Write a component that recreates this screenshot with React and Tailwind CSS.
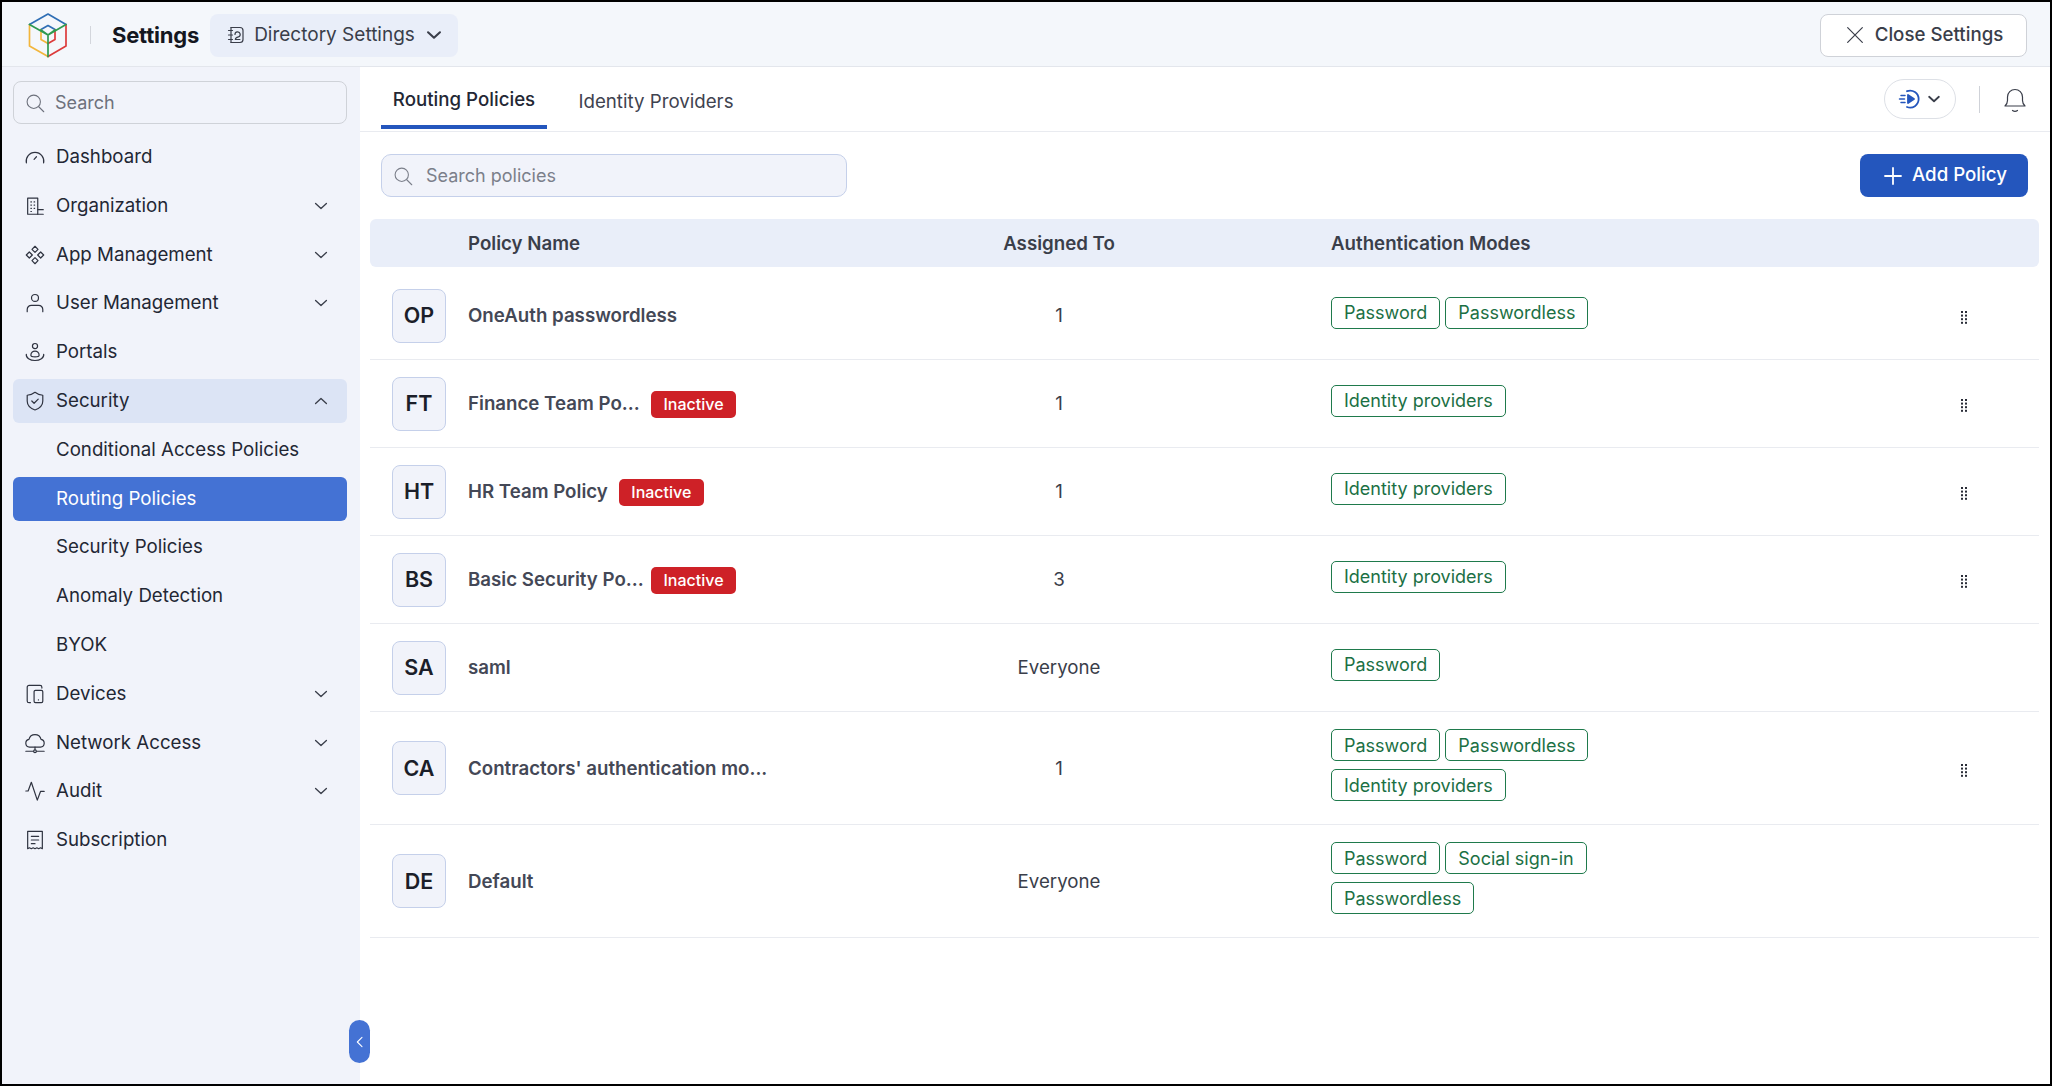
import React from "react";

const S = ({ size = 22, className = "", children, sw = 1.3 }) => (
  <svg width={size} height={size} viewBox="0 0 24 24" fill="none" stroke="currentColor" strokeWidth={sw} strokeLinecap="round" strokeLinejoin="round" className={"shrink-0 " + className}>
    {children}
  </svg>
);

const Logo = () => (
  <svg width="40" height="46" viewBox="0 0 40 46" fill="none" strokeWidth="1.7" strokeLinejoin="round" strokeLinecap="round" className="shrink-0">
    <path d="M1.5 12.500 20 2l18 10.500" stroke="#2f6fb5" />
    <path d="M13 17.500 20 13.500l7 4" stroke="#2f6fb5" />
    <path d="M1.500 13v21L20 44.500" stroke="#f2b63c" />
    <path d="M38 13v21L20 44.500" stroke="#dc3b3b" />
    <path d="M13 18v9.500l7 4" stroke="#f2b63c" />
    <path d="M27 18v9.500l-7 4" stroke="#dc3b3b" />
    <path d="M1.500 12.500 20 23l18-10.500M20 23v21.500M13 18l7 5 7-5" stroke="#2e9a4f" />
  </svg>
);

const Chevron = ({ up, size = 20, className = "", sw = 1.6 }) => (
  <S size={size} sw={sw} className={className}>
    <path d={up ? "M5.500 15 12 9l6.500 6" : "M5.500 9 12 15l6.500-6"} />
  </S>
);

const icons = {
  dashboard: <><path d="M2.600 18.500a9.600 9.600 0 1 1 18.800 0" /><path d="m11 14.500 2.600-2.800" /></>,
  org: <><path d="M4 21V3.500h11V21z" /><path d="M15 21h6M15 16h6" /><path d="M7.500 7.500h.6M11 7.500h.6M7.500 11h.6M11 11h.6M7.500 14.500h.6M11 14.500h.6M7.500 18h.6" /></>,
  app: <><path d="m12 2.500 3.300 3.300L12 9.100 8.700 5.800z" /><path d="m12 14.900 3.300 3.300-3.300 3.300-3.300-3.300z" /><path d="m5.800 8.700 3.300 3.300-3.300 3.300L2.500 12z" /><path d="m18.200 8.700 3.300 3.300-3.300 3.300-3.300-3.300z" /></>,
  user: <><circle cx="12" cy="6.500" r="3.800" /><path d="M3.500 21.500V19a4.500 4.500 0 0 1 4.500-4.500h8a4.500 4.500 0 0 1 4.500 4.500v2.500" /></>,
  portal: <><circle cx="12" cy="5.500" r="2.800" /><path d="M7.500 15.500a4.500 4.500 0 0 1 9 0c0 1.200-2 1.800-4.500 1.800s-4.500-.6-4.500-1.800z" /><path d="M2.500 14.500c-.5 4 4 6.800 9.500 6.800s10-2.800 9.500-6.800" /></>,
  security: <><path d="M12 2.500c2.500 2 5.500 3 8.500 3.200v6.300c0 4.500-3.500 8-8.500 9.800-5-1.800-8.500-5.300-8.500-9.800V5.700c3-.2 6-1.200 8.500-3.200z" /><path d="m8.500 12 2.500 2.500 4.500-4.500" /></>,
  devices: <><path d="M7 21.500H5.500a2 2 0 0 1-2-2v-15a2 2 0 0 1 2-2h12a2 2 0 0 1 2 2v1" /><rect x="11" y="8" width="9.500" height="13.500" rx="1.500" /><path d="M15.700 18.500h.1" /></>,
  network: <><path d="M6.500 16.500H6a4.300 4.300 0 0 1-.6-8.500 6.800 6.800 0 0 1 13.200 0 4.300 4.300 0 0 1-.6 8.500z" /><path d="M12 16.500v2.500M2 21h8M14 21h8" /><circle cx="12" cy="21" r="1.500" /></>,
  audit: <><path d="M2 12h2.500L8 2.500 14.500 22l3.500-9.500h4" /></>,
  sub: <><path d="M4 2.500h16v19l-2-1-2 1-2-1-2 1-2-1-2 1-2-1-2 1z" /><path d="M8 8h8M8 12h8M8 16h4" /></>,
};

const Search = ({ size = 22, className = "" }) => (
  <S size={size} className={className} sw={1.3}><circle cx="10.500" cy="10.500" r="8" /><path d="m16.500 16.500 6 6" /></S>
);

const NavItem = ({ icon, label, chevron, up, active }) => (
  <div className={"flex h-[44px] items-center rounded-md pl-[11px] pr-[16px] " + (active ? "bg-[#dce4f5]" : "")}>
    <S size={22} className="text-[#2f3340]">{icons[icon]}</S>
    <span className="ml-[10px] flex-1 text-[#232734]">{label}</span>
    {chevron && <Chevron up={up} size={20} className="text-[#3a3e4a]" />}
  </div>
);

const SubItem = ({ label, active }) => (
  <div className={"flex h-[44px] items-center rounded-md pl-[43px] " + (active ? "bg-[#4472d4] text-white" : "text-[#232734]")}>{label}</div>
);

const Tag = ({ children }) => (
  <span className="flex h-[32px] items-center rounded-[5px] border-[1.5px] border-[#1f7a4c] bg-white px-[12px] text-[18px] text-[#1b7044]">{children}</span>
);

const Dots = () => (
  <svg width="8" height="15" viewBox="0 0 8 15" fill="#2a2d38">
    {[0, 1].map((c) => [0, 1, 2, 3].map((r) => <rect key={c + "-" + r} x={1 + c * 4} y={1 + r * 3.600} width="2" height="2" />))}
  </svg>
);

const rows = [
  { a: "OP", n: "OneAuth passwordless", to: "1", tags: ["Password", "Passwordless"], menu: true },
  { a: "FT", n: "Finance Team Po...", inactive: true, cut: true, to: "1", tags: ["Identity providers"], menu: true },
  { a: "HT", n: "HR Team Policy", inactive: true, to: "1", tags: ["Identity providers"], menu: true },
  { a: "BS", n: "Basic Security Po...", inactive: true, cut: true, to: "3", tags: ["Identity providers"], menu: true },
  { a: "SA", n: "saml", to: "Everyone", tags: ["Password"] },
  { a: "CA", n: "Contractors' authentication mo...", to: "1", tags: ["Password", "Passwordless", "Identity providers"], menu: true },
  { a: "DE", n: "Default", to: "Everyone", tags: ["Password", "Social sign-in", "Passwordless"] },
];

const gridCols = "grid grid-cols-[98px_400px_382px_1fr_150px] items-center";

export default function App() {
  return (
    <div className="flex h-[1086px] w-[2052px] flex-col overflow-hidden border-2 border-black bg-white text-[18.7px] font-['Inter','Liberation_Sans',sans-serif]">
      <header className="flex h-[65px] shrink-0 items-center border-b border-[#e3e6ec] bg-[#f4f7fb] pl-[26px] pr-[23px] pt-[2px]">
        <Logo />
        <div className="ml-[22px] h-[18px] w-px bg-[#d3d6dc]" />
        <span className="ml-[21px] text-[22px] font-bold tracking-[-0.2px] text-[#14171f]">Settings</span>
        <div className="ml-[11px] flex h-[43px] w-[248px] items-center rounded-lg bg-[#e9eef9] pl-[16px] text-[#3a3e4a]">
          <svg width="20" height="20" viewBox="0 0 20 20" fill="none" stroke="currentColor" strokeWidth="1.200" strokeLinecap="round" className="shrink-0">
            <path d="M5 2.500h9a3 3 0 0 1 3 3v9a3 3 0 0 1-3 3H5" />
            <path d="M5 2.500v15M2.500 5.500h4M2.500 10h4M2.500 14.500h4" />
            <path d="M9 9.500a2.600 2.600 0 1 1 3.400 2.400c-2 .5-3 1.200-3 2.600h4.500" />
          </svg>
          <span className="ml-[8px] whitespace-nowrap pt-[1px] text-[19px]">Directory Settings</span>
          <Chevron size={22} sw={2.300} className="ml-[8px]" />
        </div>
        <div className="flex-1" />
        <div className="flex h-[43px] w-[207px] items-center justify-center rounded-lg border border-[#cfd2d8] bg-white text-[#3a3e4a]">
          <S size={22} sw={1.300}><path d="M4 4l16 16M20 4 4 20" /></S>
          <span className="ml-[9px] pt-[1px] font-medium">Close Settings</span>
        </div>
      </header>

      <div className="flex min-h-0 flex-1">
        <aside className="relative flex w-[358px] shrink-0 flex-col bg-[#f1f3fa] pl-[11px] pr-[13px] pt-[14px]">
          <div className="flex h-[43px] items-center rounded-lg border border-[#cfd2d8] pl-[11px] text-[18px] text-[#6d717c]">
            <Search size={20} />
            <span className="ml-[10px]">Search</span>
          </div>
          <div className="mt-[11px] flex flex-col gap-[4.800px]">
            <NavItem icon="dashboard" label="Dashboard" />
            <NavItem icon="org" label="Organization" chevron />
            <NavItem icon="app" label="App Management" chevron />
            <NavItem icon="user" label="User Management" chevron />
            <NavItem icon="portal" label="Portals" />
            <NavItem icon="security" label="Security" chevron up active />
            <SubItem label="Conditional Access Policies" />
            <SubItem label="Routing Policies" active />
            <SubItem label="Security Policies" />
            <SubItem label="Anomaly Detection" />
            <SubItem label="BYOK" />
            <NavItem icon="devices" label="Devices" chevron />
            <NavItem icon="network" label="Network Access" chevron />
            <NavItem icon="audit" label="Audit" chevron />
            <NavItem icon="sub" label="Subscription" />
          </div>
          <div className="absolute bottom-[21px] right-[-10px] z-10 flex h-[43px] w-[21px] items-center justify-center rounded-full bg-[#4472d4] text-white">
            <S size={16} sw={1.600}><path d="m15 5-7 7 7 7" /></S>
          </div>
        </aside>

        <main className="flex min-w-0 flex-1 flex-col">
          <div className="flex h-[65px] shrink-0 items-stretch border-b border-[#e9ebf0] pl-[21px] pr-[22px]">
            <div className="mb-[2px] flex w-[166px] items-center justify-center border-b-4 border-[#2456bd] pt-[8px] font-medium text-[#232734]">Routing Policies</div>
            <div className="mb-[2px] ml-[29px] flex w-[160px] items-center justify-center whitespace-nowrap pt-[8px] text-[#3f4350]">Identity Providers</div>
            <div className="flex-1" />
            <div className="flex items-center">
              <div className="flex h-[40px] w-[72px] items-center justify-center gap-[3px] rounded-full border border-[#dde0e6]">
                <svg width="24" height="24" viewBox="0 0 24 24" fill="none" stroke="#2456bd" strokeWidth="1.800" strokeLinecap="round">
                  <path d="M9 4.200A8.500 8.500 0 1 1 9 20" />
                  <path d="M10 8l6 4-6 4z" fill="#2456bd" strokeLinejoin="round" />
                  <path d="M3 8.500h4M1.500 12h5M3 15.500h4" strokeWidth="1.500" />
                </svg>
                <Chevron size={18} sw={2.400} className="text-[#3a3e4a]" />
              </div>
              <div className="ml-[23px] h-[27px] w-px bg-[#cfd2d8]" />
              <svg width="26" height="28" viewBox="0 0 26 28" fill="none" stroke="#3a3e4a" strokeWidth="1.200" strokeLinecap="round" strokeLinejoin="round" className="ml-[22px] mt-[1px]">
                <path d="M3 20c1.500-1.500 2.500-3 2.500-5.500V11a7.500 7.500 0 0 1 15 0v3.500c0 2.500 1 4 2.500 5.500z" />
                <path d="M10.500 24.500c1.500 1 3.500 1 5 0" />
              </svg>
            </div>
          </div>

          <div className="flex items-center justify-between pl-[21px] pr-[22px] pt-[22px]">
            <div className="flex h-[43px] w-[466px] items-center rounded-[10px] border border-[#c5d0ea] bg-[#f1f3fa] pl-[11px] text-[18px] text-[#7b7f8a]">
              <Search size={20} />
              <span className="ml-[13px]">Search policies</span>
            </div>
            <div className="flex h-[43px] w-[168px] items-center justify-center rounded-lg bg-[#2456bd] font-medium text-white">
              <S size={24} sw={1.800}><path d="M12 4v16M4 12h16" /></S>
              <span className="ml-[7px]">Add Policy</span>
            </div>
          </div>

          <div className="ml-[10px] mr-[11px] mt-[22px]">
            <div className={gridCols + " h-[48px] rounded-md bg-[#e9eef9] pt-[2px] font-semibold text-[#3a3e4a]"}>
              <div />
              <div>Policy Name</div>
              <div className="text-center">Assigned To</div>
              <div className="pl-[81px]">Authentication Modes</div>
              <div />
            </div>
            <div className="pt-[5px]">
              {rows.map((r) => (
                <div key={r.a} className={gridCols + " min-h-[88px] border-b border-[#e9ebf0]"}>
                  <div className="pl-[22px]">
                    <div className="flex h-[54px] w-[54px] items-center justify-center rounded-lg border border-[#c5d0ea] bg-[#f1f3fa] text-[21.500px] font-semibold text-[#1b1e29]">{r.a}</div>
                  </div>
                  <div className="flex items-center pt-[2px]">
                    <span className={"whitespace-nowrap font-semibold text-[#444856] " + (r.cut ? "w-[172px]" : "")}>{r.n}</span>
                    {r.inactive && <span className="ml-[11px] flex h-[27px] w-[85px] items-center justify-center rounded-[5px] bg-[#ce2127] text-[16px] font-medium text-white">Inactive</span>}
                  </div>
                  <div className="pt-[2px] text-center text-[#3a3e4a]">{r.to}</div>
                  <div className="flex w-[400px] flex-wrap gap-x-[5px] gap-y-[8px] pb-[23px] pl-[81px] pt-[17px]">
                    {r.tags.map((t) => <Tag key={t}>{t}</Tag>)}
                  </div>
                  <div className="flex justify-center pt-[4px]">{r.menu && <Dots />}</div>
                </div>
              ))}
            </div>
          </div>
        </main>
      </div>
    </div>
  );
}
